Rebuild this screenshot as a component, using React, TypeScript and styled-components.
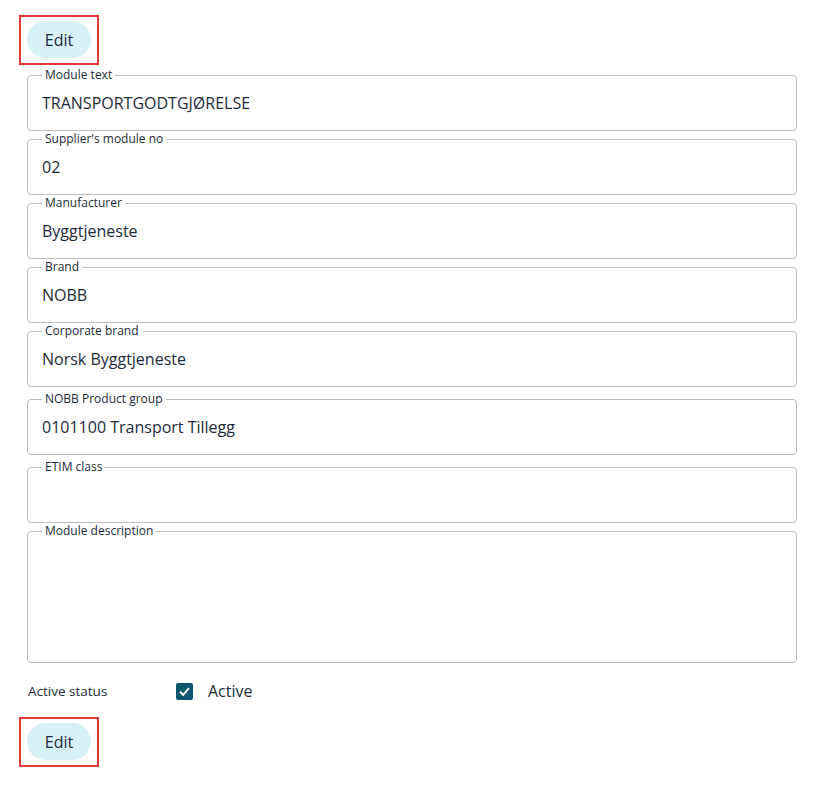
import React from 'react';
import styled, { createGlobalStyle } from 'styled-components';

const GlobalStyle = createGlobalStyle`
  body {
    margin: 0;
    background: #ffffff;
    font-family: "Open Sans", "Noto Sans", sans-serif;
    color: #1d2a3a;
  }
`;

const Page = styled.div`
  width: 819px;
  padding: 15px 22px 0 19px;
  box-sizing: border-box;
`;

const Highlight = styled.div`
  display: inline-flex;
  border: 2px solid #e5383b;
  padding: 4px 6px 5px 6px;
`;

const EditButton = styled.button`
  width: 64px;
  height: 37px;
  border: none;
  border-radius: 19px;
  background: #d8f1f7;
  color: #1d2a3a;
  font-family: inherit;
  font-size: 16px;
  cursor: pointer;
`;

const Fields = styled.div`
  display: flex;
  flex-direction: column;
  padding-left: 8px;
  margin-top: 3px;
`;

const Field = styled.fieldset<{ $height: number; $spaceTop: number }>`
  margin: ${p => p.$spaceTop}px 0 0 0;
  padding: 0 14px;
  height: ${p => p.$height}px;
  box-sizing: border-box;
  border: 1px solid #bdbdbd;
  border-radius: 4px;
  min-width: 0;
`;

const Legend = styled.legend`
  margin-left: 0;
  padding: 0 3px;
  font-size: 12px;
  line-height: 14px;
  color: #1d2a3a;
`;

const Value = styled.div`
  font-size: 16px;
  line-height: 20px;
  margin-top: 11px;
  color: #1d2a3a;
`;

const StatusRow = styled.div`
  display: flex;
  align-items: center;
  padding-left: 9px;
  margin-top: 18px;
  height: 20px;
`;

const StatusLabel = styled.span`
  width: 148px;
  font-size: 13.5px;
`;

const CheckBox = styled.span`
  width: 17px;
  height: 17px;
  border-radius: 2px;
  background: #0d566f;
  display: inline-flex;
  align-items: center;
  justify-content: center;
  margin-right: 15px;
`;

const CheckText = styled.span`
  font-size: 16px;
`;

const BottomBar = styled.div`
  margin-top: 16px;
`;

interface FieldData {
  label: string;
  value: string;
  height: number;
  spaceTop: number;
}

const fields: FieldData[] = [
  { label: 'Module text', value: 'TRANSPORTGODTGJØRELSE', height: 63, spaceTop: 0 },
  { label: "Supplier's module no", value: '02', height: 63, spaceTop: 1 },
  { label: 'Manufacturer', value: 'Byggtjeneste', height: 63, spaceTop: 1 },
  { label: 'Brand', value: 'NOBB', height: 63, spaceTop: 1 },
  { label: 'Corporate brand', value: 'Norsk Byggtjeneste', height: 63, spaceTop: 1 },
  { label: 'NOBB Product group', value: '0101100 Transport Tillegg', height: 63, spaceTop: 5 },
  { label: 'ETIM class', value: '', height: 63, spaceTop: 5 },
  { label: 'Module description', value: '', height: 139, spaceTop: 1 },
];

const EditAction: React.FC = () => (
  <Highlight>
    <EditButton>Edit</EditButton>
  </Highlight>
);

const App: React.FC = () => {
  return (
    <Page>
      <GlobalStyle />
      <EditAction />
      <Fields>
        {fields.map(f => (
          <Field key={f.label} $height={f.height} $spaceTop={f.spaceTop}>
            <Legend>{f.label}</Legend>
            {f.value && <Value>{f.value}</Value>}
          </Field>
        ))}
      </Fields>
      <StatusRow>
        <StatusLabel>Active status</StatusLabel>
        <CheckBox>
          <svg width="13" height="13" viewBox="0 0 13 13">
            <path d="M2 6.8 L5.2 9.8 L11 3.2" fill="none" stroke="#ffffff" strokeWidth="2" />
          </svg>
        </CheckBox>
        <CheckText>Active</CheckText>
      </StatusRow>
      <BottomBar>
        <EditAction />
      </BottomBar>
    </Page>
  );
};

export default App;
